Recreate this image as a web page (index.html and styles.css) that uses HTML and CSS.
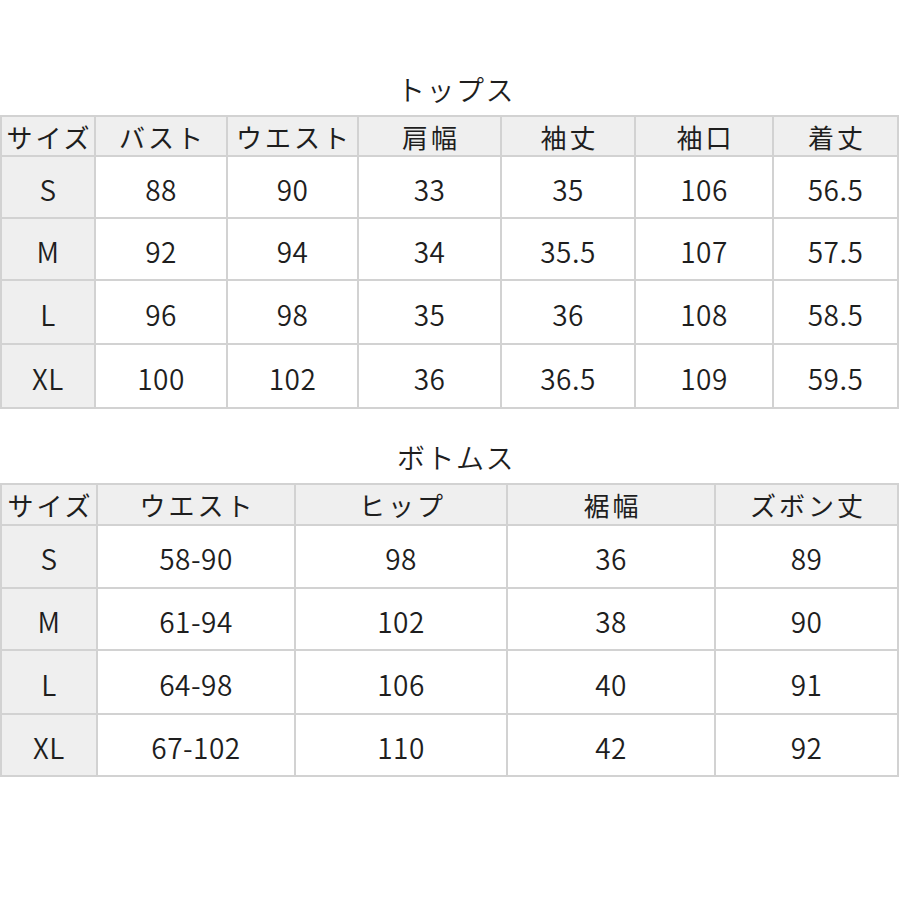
FILE: index.html
```html
<!DOCTYPE html>
<html lang="ja">
<head>
<meta charset="utf-8">
<link rel="stylesheet" href="styles.css">
</head>
<body>
<div class="page">
  <div class="title title-top">トップス</div>
  <div class="grid grid-tops">
    <div class="cell head">サイズ</div>
    <div class="cell head">バスト</div>
    <div class="cell head">ウエスト</div>
    <div class="cell head">肩幅</div>
    <div class="cell head">袖丈</div>
    <div class="cell head">袖口</div>
    <div class="cell head">着丈</div>

    <div class="cell size">S</div>
    <div class="cell">88</div><div class="cell">90</div><div class="cell">33</div><div class="cell">35</div><div class="cell">106</div><div class="cell">56.5</div>

    <div class="cell size">M</div>
    <div class="cell">92</div><div class="cell">94</div><div class="cell">34</div><div class="cell">35.5</div><div class="cell">107</div><div class="cell">57.5</div>

    <div class="cell size">L</div>
    <div class="cell">96</div><div class="cell">98</div><div class="cell">35</div><div class="cell">36</div><div class="cell">108</div><div class="cell">58.5</div>

    <div class="cell size">XL</div>
    <div class="cell">100</div><div class="cell">102</div><div class="cell">36</div><div class="cell">36.5</div><div class="cell">109</div><div class="cell">59.5</div>
  </div>

  <div class="title title-bottom">ボトムス</div>
  <div class="grid grid-bottoms">
    <div class="cell head">サイズ</div>
    <div class="cell head">ウエスト</div>
    <div class="cell head">ヒップ</div>
    <div class="cell head">裾幅</div>
    <div class="cell head">ズボン丈</div>

    <div class="cell size">S</div>
    <div class="cell">58-90</div><div class="cell">98</div><div class="cell">36</div><div class="cell">89</div>

    <div class="cell size">M</div>
    <div class="cell">61-94</div><div class="cell">102</div><div class="cell">38</div><div class="cell">90</div>

    <div class="cell size">L</div>
    <div class="cell">64-98</div><div class="cell">106</div><div class="cell">40</div><div class="cell">91</div>

    <div class="cell size">XL</div>
    <div class="cell">67-102</div><div class="cell">110</div><div class="cell">42</div><div class="cell">92</div>
  </div>
</div>
</body>
</html>
```
FILE: styles.css
```css
* { box-sizing: border-box; }
html, body {
  margin: 0;
  padding: 0;
  background: #ffffff;
}
body {
  font-family: "Noto Sans CJK JP", "Noto Sans", sans-serif;
  color: #1e1e1e;
}
.page {
  width: 900px;
}
.title {
  height: 48px;
  line-height: 48px;
  text-align: center;
  font-size: 28px;
  font-weight: 350;
  letter-spacing: 1.5px;
  padding-left: 12px;
  box-sizing: content-box;
}
.title-top {
  padding-top: 65px;
  margin-bottom: 2px;
}
.title-bottom {
  padding-top: 24px;
  margin-bottom: 2px;
}
.grid {
  display: grid;
  width: 899px;
  background: #d2d2d2;
  padding: 2px;
  gap: 2px;
}
.grid-tops {
  grid-template-columns: 92px 130px 129px 141px 132px 136px 123px;
  grid-template-rows: 38px 60px 60px 62px 62px;
}
.grid-bottoms {
  grid-template-columns: 94px 196px 210px 206px 181px;
  grid-template-rows: 39px 61px 60px 62px 60px;
}
.cell {
  background: #ffffff;
  display: flex;
  align-items: center;
  justify-content: center;
  font-size: 28px;
  font-weight: 350;
  letter-spacing: 0.5px;
  padding-top: 3px;
  white-space: nowrap;
}
.head {
  background: #efefef;
  font-size: 26px;
  font-weight: 400;
  letter-spacing: 3px;
  padding-top: 0;
  padding-left: 3px;
}
.size {
  background: #efefef;
}
```
